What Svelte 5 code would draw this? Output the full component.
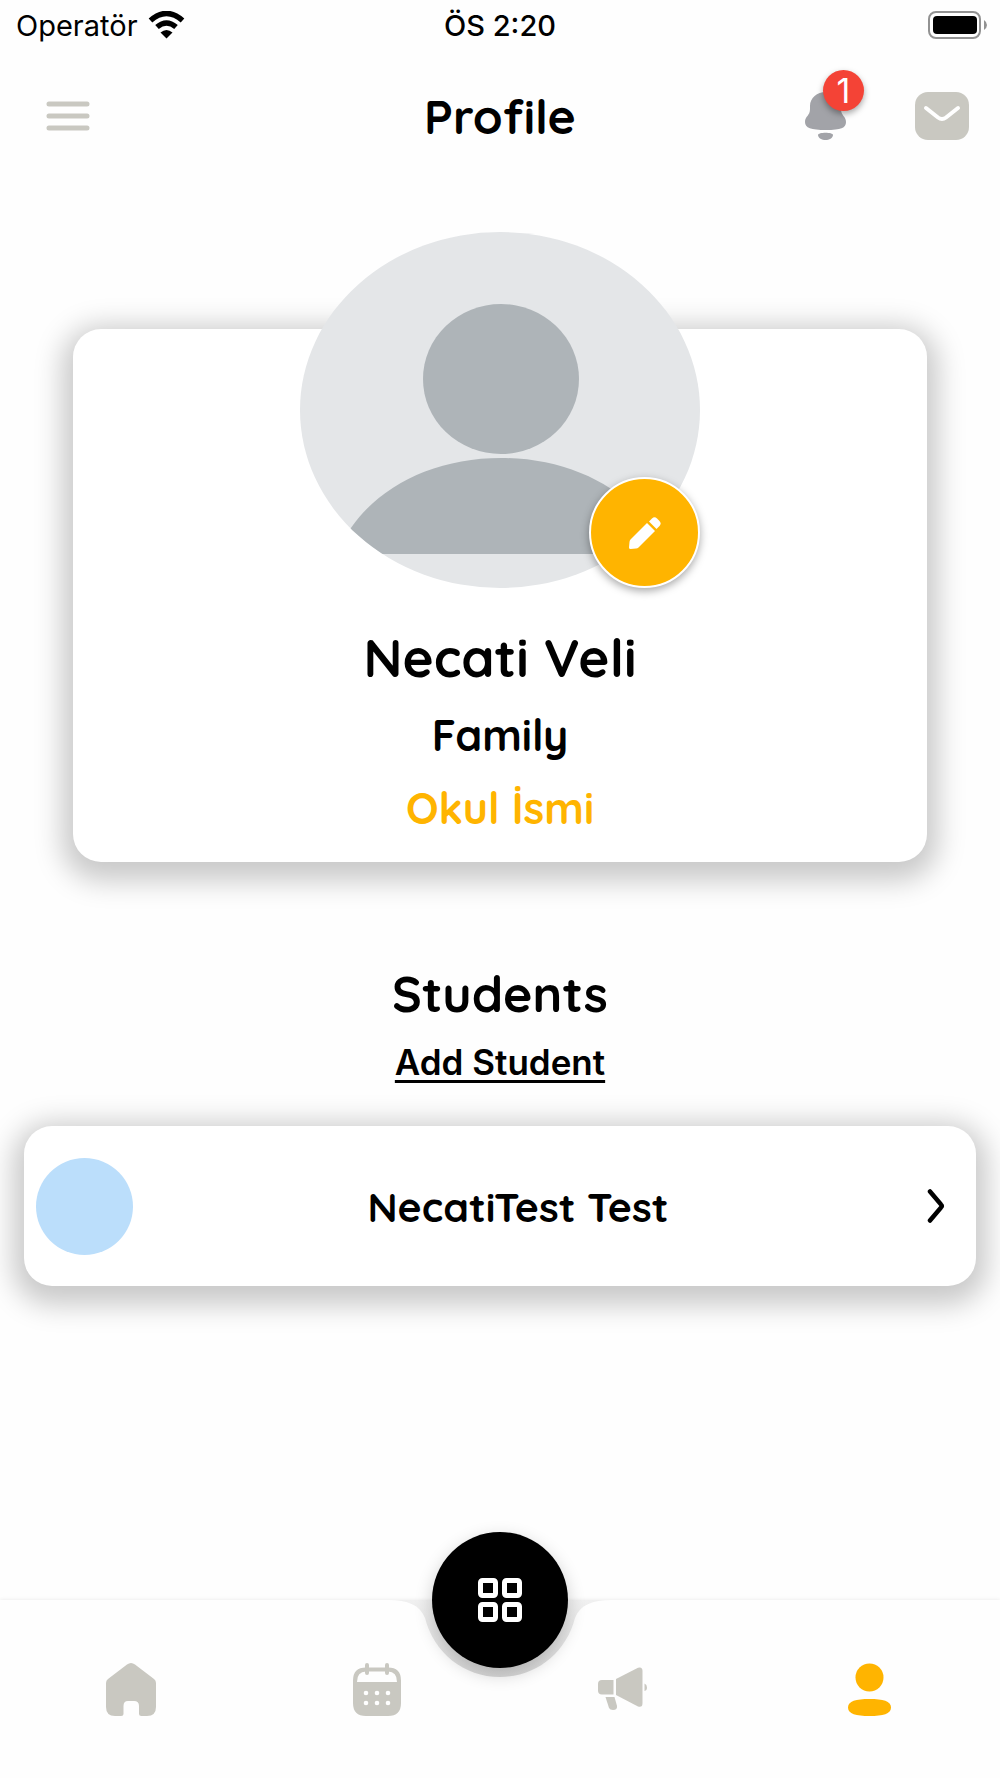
<script lang="ts">
  type Student = { id: number; name: string };

  const profile = {
    name: 'Necati Veli',
    role: 'Family',
    school: 'Okul İsmi'
  };

  const students: Student[] = [{ id: 1, name: 'NecatiTest Test' }];

  let notifications = $state(1);
  let activeTab = $state('profile');

  const tabs = [
    { id: 'home', label: 'Home' },
    { id: 'calendar', label: 'Calendar' },
    { id: 'news', label: 'Announcements' },
    { id: 'profile', label: 'Profile' }
  ];
</script>

<div class="page">
  <div class="status-bar">
    <div class="carrier">
      <span>Operatör</span>
      <svg width="37" height="28" viewBox="0 0 37 28" aria-hidden="true">
        <path d="M2.5 9.500Q18.500 -4.500 34.500 9.500" fill="none" stroke="#000" stroke-width="5.500" />
        <path d="M9 16Q18.500 8 28 16" fill="none" stroke="#000" stroke-width="5.500" />
        <path d="M12.500 21.500Q18.500 16.500 24.500 21.500L18.500 27.500Z" />
      </svg>
    </div>
    <span class="time">ÖS 2:20</span>
    <svg class="battery" width="60" height="28" viewBox="0 0 60 28" aria-hidden="true">
      <rect x="1" y="1" width="51" height="26" rx="7" fill="none" stroke="#929292" stroke-width="2" />
      <rect x="5" y="5" width="44" height="18" rx="4" />
      <path d="M56 9q3 2 3 5t-3 5z" fill="#929292" />
    </svg>
  </div>

  <header class="header">
    <button class="icon-button menu" aria-label="Menu">
      <svg width="44" height="30" viewBox="0 0 44 30">
        <path d="M3 3h38M3 15h38M3 27h38" stroke="#c9c8c1" stroke-width="5" stroke-linecap="round" />
      </svg>
    </button>
    <h1>Profile</h1>
    <div class="header-actions">
      <button class="icon-button" aria-label="Notifications">
        <svg width="42" height="48" viewBox="0 0 42 48">
          <path
            d="M21 0C12 0 5 6 5 14V17C5 24 0 24 0 30C0 36 6 38 21 38S41 36 41 30C41 24 36 24 36 17V14C36 6 30 0 21 0Z"
            fill="#a2a3a8"
          />
          <path d="M13 43C13 40 28 40 28 43C28 46 24 48 20.500 48S13 46 13 43Z" fill="#a2a3a8" />
        </svg>
        {#if notifications > 0}
          <span class="badge">{notifications}</span>
        {/if}
      </button>
      <button class="icon-button" aria-label="Messages">
        <svg width="54" height="48" viewBox="0 0 54 48">
          <rect width="54" height="48" rx="13" fill="#c9c8c1" />
          <path
            d="M11 16L23 25.500Q27 28.500 31 25.500L43 16"
            fill="none"
            stroke="#fff"
            stroke-width="4"
            stroke-linecap="round"
          />
        </svg>
      </button>
    </div>
  </header>

  <main>
    <section class="card profile-card">
      <div class="avatar">
        <svg width="400" height="356" viewBox="0 0 400 356" aria-hidden="true">
          <defs>
            <clipPath id="avatar-clip"><ellipse cx="200" cy="178" rx="200" ry="178" /></clipPath>
          </defs>
          <g clip-path="url(#avatar-clip)">
            <rect width="400" height="356" fill="#e4e6e8" />
            <ellipse cx="201" cy="147" rx="78" ry="75" fill="#aeb4b8" />
            <path d="M37 322C61 262 126 226 201 226S341 262 365 322Z" fill="#aeb4b8" />
          </g>
        </svg>
        <button class="edit" aria-label="Edit photo">
          <svg width="32" height="32" viewBox="0 0 32 32" fill="#fff">
            <path d="M18 6L26 14L9.500 30.500Q8.500 31.500 7 31.500L1.500 32Q0 32 0 30.500L.500 25Q.500 23.500 1.500 22.500Z" />
            <path d="M20 4.500L23 1.500Q25.500 -1 28 1.500L30 3.500Q33 6.500 30.500 9L27.500 12Z" />
          </svg>
        </button>
      </div>
      <h2>{profile.name}</h2>
      <p class="role">{profile.role}</p>
      <p class="school">{profile.school}</p>
    </section>

    <section class="students">
      <h2>Students</h2>
      <a class="add" href="#add">Add Student</a>
      {#each students as student (student.id)}
        <button class="card student">
          <span class="student-photo"></span>
          <span class="student-name">{student.name}</span>
          <svg width="18" height="34" viewBox="0 0 18 34" aria-hidden="true">
            <path
              d="M3 2.500L14 15.500Q15.500 17 14 18.500L3 31.500"
              fill="none"
              stroke="#000"
              stroke-width="4.500"
              stroke-linecap="round"
            />
          </svg>
        </button>
      {/each}
    </section>
  </main>

  <nav class="bottom-nav">
    <div class="nav-surface" aria-hidden="true">
      <span></span>
      <svg width="240" height="178" viewBox="0 0 240 178">
        <defs>
          <linearGradient id="notch-shade" x1="0" y1="0" x2="0" y2="1">
            <stop offset="0" stop-color="#f0f0f0" />
            <stop offset="1" stop-color="#d8d8d8" />
          </linearGradient>
        </defs>
        <rect width="240" height="80" fill="url(#notch-shade)" />
        <path
          d="M0 0H8C28 0 40 5 45 18C54 53 84 77 120 77S186 53 195 18C200 5 212 0 232 0H240V178H0Z"
          fill="#fefefe"
        />
      </svg>
      <span></span>
    </div>
    <button class="fab" aria-label="Modules">
      <svg width="44" height="44" viewBox="0 0 44 44" fill="none" stroke="#fff" stroke-width="5">
        <rect x="2.500" y="2.500" width="15" height="15" rx="2" />
        <rect x="26.500" y="2.500" width="15" height="15" rx="2" />
        <rect x="2.500" y="26.500" width="15" height="15" rx="2" />
        <rect x="26.500" y="26.500" width="15" height="15" rx="2" />
      </svg>
    </button>
    <div class="tabs">
      {#each tabs as tab (tab.id)}
        <button
          class="tab"
          class:active={activeTab === tab.id}
          aria-label={tab.label}
          onclick={() => (activeTab = tab.id)}
        >
          {#if tab.id === 'home'}
            <svg width="50" height="53" viewBox="0 0 50 53">
              <path
                d="M21 1.500Q25 -1.500 29 1.500L48 16Q50 17.500 50 20V44Q50 53 41 53H35.500Q33 53 33 50.500V43Q33 38 28 38H22Q17.500 38 17.500 43V50.500Q17.500 53 15 53H9Q0 53 0 44V20Q0 17.500 2 16Z"
              />
            </svg>
          {:else if tab.id === 'calendar'}
            <svg width="48" height="53" viewBox="0 0 48 53">
              <path
                fill-rule="evenodd"
                d="M13 4.500H35Q48 4.500 48 17.500V40Q48 53 35 53H13Q0 53 0 40V17.500Q0 4.500 13 4.500ZM13 8.500Q4 8.500 4 19H44Q44 8.500 35 8.500Z"
              />
              <path d="M14 2V10M34 2V10" stroke="currentColor" stroke-width="4" stroke-linecap="round" />
              <g fill="#fff">
                {#each [30, 40] as cy}
                  {#each [13, 24, 35] as cx}
                    <circle {cx} {cy} r="2.300" />
                  {/each}
                {/each}
              </g>
            </svg>
          {:else if tab.id === 'news'}
            <svg width="50" height="44" viewBox="0 0 50 44">
              <path d="M4 13H15.500V27.500H4Q0 27.500 0 23.500V17Q0 13 4 13Z" />
              <path d="M18 12L40 .700Q44.500 -.700 44.500 4V36Q44.500 41 40 39.500L18 28Z" />
              <path d="M7.500 30H16.500L19 39Q19.500 43 15 43Q12 43 11 41Z" />
              <path d="M46.500 16.500Q49 17.500 49 20.500T46.500 24Z" />
            </svg>
          {:else}
            <svg width="43" height="53" viewBox="0 0 43 53">
              <circle cx="21.500" cy="14.500" r="14" />
              <path d="M0 44.500C0 38 8 36 21.500 36S43 38 43 44.500S35 53 21.500 53S0 51 0 44.500Z" />
            </svg>
          {/if}
        </button>
      {/each}
    </div>
  </nav>
</div>

<style>
  :global(body) {
    margin: 0;
    background: #fefefe;
  }

  .page {
    display: flex;
    flex-direction: column;
    min-height: 100vh;
    overflow: hidden;
    color: #000;
    font-family: Quicksand, Lato, sans-serif;
  }

  button {
    padding: 0;
    border: none;
    background: none;
    color: inherit;
    font: inherit;
    cursor: pointer;
  }

  svg {
    display: block;
  }

  h1,
  h2,
  p {
    margin: 0;
    font-weight: 700;
  }

  .status-bar {
    display: grid;
    grid-template-columns: 1fr auto 1fr;
    align-items: center;
    height: 50px;
    padding: 0 12px;
    font-family: Inter, sans-serif;
    font-size: 29px;
  }

  .carrier {
    display: flex;
    align-items: center;
    gap: 10px;
    padding-left: 4px;
  }

  .time {
    font-weight: 500;
  }

  .battery {
    justify-self: end;
  }

  .header {
    display: grid;
    grid-template-columns: 1fr auto 1fr;
    align-items: center;
    height: 132px;
    padding: 0 31px;
  }

  .header h1 {
    font-size: 48px;
    line-height: 60px;
  }

  .icon-button {
    position: relative;
  }

  .menu {
    justify-self: start;
    margin-left: 15px;
  }

  .header-actions {
    display: flex;
    justify-content: flex-end;
    gap: 68px;
  }

  .badge {
    position: absolute;
    top: -22px;
    right: -17px;
    width: 41px;
    height: 41px;
    border-radius: 50%;
    background: #f44336;
    box-shadow: 0 3px 6px rgba(0, 0, 0, 0.35);
    color: #fff;
    font-family: Inter, sans-serif;
    font-size: 34px;
    line-height: 41px;
  }

  .card {
    border-radius: 28px;
    background: #fff;
    box-shadow: 0 8px 28px 11px rgba(0, 0, 0, 0.21);
  }

  .profile-card {
    display: flex;
    flex-direction: column;
    align-items: center;
    margin: 147px 73px 0;
    padding-bottom: 17px;
  }

  .avatar {
    position: relative;
    margin: -97px 0 35px;
  }

  .edit {
    position: absolute;
    right: 0;
    bottom: 0;
    display: grid;
    place-items: center;
    box-sizing: border-box;
    width: 111px;
    height: 111px;
    border: 2px solid #fff;
    border-radius: 50%;
    background: #ffb400;
    box-shadow: 0 3px 8px rgba(0, 0, 0, 0.35);
  }

  .profile-card h2 {
    font-size: 53px;
    line-height: 68px;
  }

  .students h2 {
    font-size: 50px;
    line-height: 68px;
  }

  .role,
  .school {
    font-size: 43px;
    line-height: 73px;
  }

  .profile-card .role {
    padding-top: 8px;
  }

  .school {
    color: #ffb400;
  }

  .students {
    display: flex;
    flex-direction: column;
    align-items: center;
    padding: 98px 24px 0;
  }

  .add {
    margin: 12px 0 42px;
    color: inherit;
    font-family: Inter, sans-serif;
    font-size: 35px;
    font-weight: 600;
    line-height: 44px;
    text-decoration-thickness: 3px;
    text-underline-offset: 5px;
  }

  .student {
    display: flex;
    align-items: center;
    box-sizing: border-box;
    width: 100%;
    height: 160px;
    padding: 0 31px 0 12px;
  }

  .student-photo {
    width: 97px;
    height: 97px;
    border-radius: 50%;
    background: #bbdefb;
  }

  .student-name {
    flex: 1;
    padding-right: 24px;
    font-size: 41px;
    font-weight: 700;
    text-align: center;
  }

  .bottom-nav {
    position: relative;
    height: 178px;
    margin-top: auto;
  }

  .nav-surface {
    position: absolute;
    inset: 0;
    display: grid;
    grid-template-columns: 1fr 240px 1fr;
    box-shadow: 0 0 4px rgba(0, 0, 0, 0.09);
  }

  .nav-surface span {
    background: #fefefe;
  }

  .fab {
    position: absolute;
    top: -68px;
    left: calc(50% - 68px);
    z-index: 1;
    display: grid;
    place-items: center;
    width: 136px;
    height: 136px;
    border-radius: 50%;
    background: #000;
    box-shadow: 0 6px 18px rgba(0, 0, 0, 0.2);
  }

  .tabs {
    position: relative;
    display: grid;
    grid-template-columns: repeat(4, 1fr);
    height: 100%;
    padding: 0 8px;
  }

  .tab {
    display: grid;
    place-items: center;
    color: #c9c8c1;
  }

  .tab svg {
    fill: currentColor;
  }

  .tab.active {
    color: #ffb400;
  }
</style>
